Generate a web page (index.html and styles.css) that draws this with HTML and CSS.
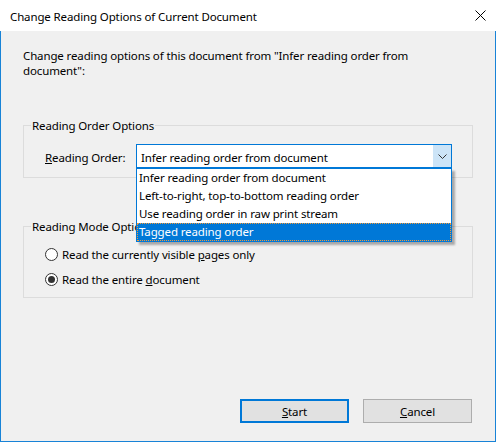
FILE: index.html
```html
<!DOCTYPE html>
<html lang="en">
<head>
<meta charset="utf-8">
<title>Change Reading Options of Current Document</title>
<link rel="stylesheet" href="styles.css">
</head>
<body>
<div class="window">
  <div class="titlebar">
    <span class="title">Change Reading Options of Current Document</span>
    <svg class="close" width="11" height="11" viewBox="0 0 11 11" aria-label="Close">
      <path d="M0.5 0.5 L10.5 10.5 M10.5 0.5 L0.5 10.5" stroke="#000" stroke-width="1" fill="none"/>
    </svg>
  </div>
  <div class="client">
    <p class="desc">Change reading options of this document from "Infer reading order from document":</p>

    <fieldset class="group group-order">
      <legend class="group-title">Reading Order Options</legend>
      <div class="field-row">
        <span class="field-label"><u>R</u>eading Order:</span>
        <div class="combo">
          <div class="combo-value">Infer reading order from document</div>
          <div class="combo-arrow">
            <svg width="9" height="5" viewBox="0 0 9 5">
              <path d="M0.5 0.5 L4.5 4.5 L8.5 0.5" stroke="#333" stroke-width="1" fill="none"/>
            </svg>
          </div>
          <ul class="dropdown">
            <li class="option">Infer reading order from document</li>
            <li class="option">Left-to-right, top-to-bottom reading order</li>
            <li class="option">Use reading order in raw print stream</li>
            <li class="option selected">Tagged reading order</li>
          </ul>
        </div>
      </div>
    </fieldset>

    <fieldset class="group group-mode">
      <legend class="group-title">Reading Mode Options</legend>
      <div class="radio-row"><span class="radio"></span><span>Read the currently visible <u>p</u>ages only</span></div>
      <div class="radio-row"><span class="radio checked"></span><span>Read the entire <u>d</u>ocument</span></div>
    </fieldset>

    <div class="buttons">
      <button class="btn btn-default"><u>S</u>tart</button>
      <button class="btn"><u>C</u>ancel</button>
    </div>
  </div>
</div>
</body>
</html>
```

FILE: styles.css
```css
* {
  box-sizing: border-box;
}

html, body {
  margin: 0;
  padding: 0;
}

body {
  width: 496px;
  height: 442px;
  font-family: "Noto Sans", "Open Sans", sans-serif;
  font-size: 11.5px;
  letter-spacing: -0.13px;
  line-height: 15px;
  color: #000;
  background: #f0f0f0;
  overflow: hidden;
}

.window {
  width: 496px;
  height: 442px;
  display: flex;
  flex-direction: column;
}

.titlebar {
  height: 31px;
  flex: none;
  background: #fff;
  display: flex;
  align-items: center;
  justify-content: space-between;
  padding-left: 10px;
  padding-right: 10px;
}

.title {
  padding-top: 1px;
}

.close {
  display: block;
  margin-top: -1px;
}

.client {
  flex: 1;
  display: flex;
  flex-direction: column;
  background: #f0f0f0;
  border: 1px solid #1883d7;
  border-top: none;
  padding: 17px 22px 18px 22px;
}

.desc {
  margin: 0;
  max-width: 420px;
}

.group {
  margin: 0;
  min-width: 0;
  border: 1px solid #dcdcdc;
}

.group-title {
  margin: 0;
  padding: 0 1px;
  line-height: 15px;
}

.group-order {
  margin-top: 40px;
  padding: 11px 21px 9px 7px;
}

.field-row {
  display: flex;
  align-items: center;
  margin-left: 14px;
}

.field-label {
  width: 91px;
  flex: none;
  padding-top: 3px;
}

.combo {
  position: relative;
  flex: none;
  width: 316px;
  height: 24px;
  border: 1px solid #0078d7;
  background: #fff;
  display: flex;
}

.combo-value {
  flex: 1;
  padding: 4px 0 0 3px;
  border: 1px solid #fff;
}

.combo-arrow {
  width: 18px;
  background: #cce4f7;
  display: flex;
  align-items: center;
  justify-content: center;
  padding-top: 1px;
}

.combo-arrow svg {
  display: block;
}

.dropdown {
  position: absolute;
  top: 23px;
  left: -1px;
  width: 316px;
  margin: 0;
  padding: 0;
  list-style: none;
  background: #fff;
  border: 1px solid #0078d7;
  box-shadow: 3px 3px 2px rgba(0, 0, 0, 0.3);
  z-index: 10;
}

.option {
  height: 18px;
  line-height: 18px;
  padding-left: 2px;
  white-space: nowrap;
}

.option.selected {
  background: #0078d7;
  color: #fff;
  outline: 1px dotted #f39a37;
  outline-offset: -1px;
}

.group-mode {
  margin-top: 41px;
  padding: 10px 21px 8px 7px;
  display: flex;
  flex-direction: column;
  gap: 5px;
}

.radio-row {
  height: 20px;
  display: flex;
  align-items: center;
  gap: 4px;
  margin-left: 14px;
}

.radio {
  width: 13px;
  height: 13px;
  flex: none;
  border: 1px solid #333;
  border-radius: 50%;
  background: #fff;
  display: flex;
  align-items: center;
  justify-content: center;
}

.radio.checked::after {
  content: "";
  width: 7px;
  height: 7px;
  border-radius: 50%;
  background: #333;
}

.buttons {
  margin-top: auto;
  display: flex;
  justify-content: flex-end;
  gap: 14px;
  padding-right: 1px;
}

.btn {
  width: 109px;
  height: 24px;
  padding: 0;
  font: inherit;
  letter-spacing: inherit;
  color: #000;
  background: #e1e1e1;
  border: 1px solid #adadad;
}

.btn-default {
  border: 2px solid #0078d7;
}
```
